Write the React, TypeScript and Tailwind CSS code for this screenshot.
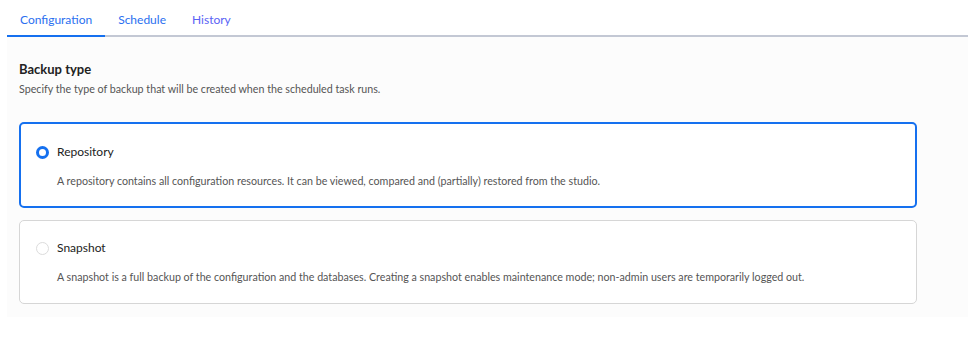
import { useState } from 'react';

type Option = {
  id: string;
  label: string;
  description: string;
};

const OPTIONS: Option[] = [
  {
    id: 'repository',
    label: 'Repository',
    description:
      'A repository contains all configuration resources. It can be viewed, compared and (partially) restored from the studio.',
  },
  {
    id: 'snapshot',
    label: 'Snapshot',
    description:
      'A snapshot is a full backup of the configuration and the databases. Creating a snapshot enables maintenance mode; non-admin users are temporarily logged out.',
  },
];

const TABS = ['Configuration', 'Schedule', 'History'];

function Radio({ checked }: { checked: boolean }) {
  return checked ? (
    <span className="w-[13px] h-[13px] rounded-full border-[3.5px] border-[#1570ef] bg-white shrink-0" />
  ) : (
    <span className="w-[13px] h-[13px] rounded-full border border-[#dcdcdc] bg-white shrink-0" />
  );
}

export default function App() {
  const [tab, setTab] = useState('Configuration');
  const [selected, setSelected] = useState('repository');

  return (
    <div className="w-[968px] h-[351px] bg-white pl-[7px] font-['Lato',sans-serif] text-[#222]">
      <div className="flex border-b-2 border-[#c3c8d4] h-[37px]">
        {TABS.map(t => (
          <button
            key={t}
            type="button"
            onClick={() => setTab(t)}
            className={`px-[13px] pt-[5px] text-[12px] -mb-[2px] border-b-2 ${
              tab === t ? 'border-[#1570ef]' : 'border-transparent'
            } ${t === 'History' ? 'text-[#5a63f5]' : 'text-[#2a6ff0]'}`}
          >
            {t}
          </button>
        ))}
      </div>
      <div className="bg-[#fcfcfc] h-[280px] pl-[12px] pr-[51px] pt-[23px]">
        <h2 className="text-[13px] font-bold leading-[18px] text-[#222]">Backup type</h2>
        <p className="text-[10.7px] text-[#555] mt-[3px] leading-[15px]">
          Specify the type of backup that will be created when the scheduled task runs.
        </p>
        <div className="flex flex-col gap-[12px] mt-[26px]">
          {OPTIONS.map(o => {
            const checked = selected === o.id;
            return (
              <div
                key={o.id}
                role="radio"
                aria-checked={checked}
                onClick={() => setSelected(o.id)}
                className={`cursor-pointer bg-white rounded-[5px] ${
                  checked
                    ? 'border-2 border-[#1570ef] h-[86px] pl-[15px] pt-[20px]'
                    : 'border border-[#d6d6d6] h-[84px] pl-[16px] pt-[19px]'
                }`}
              >
                <div className="flex items-center gap-[8px]">
                  <Radio checked={checked} />
                  <span className="text-[12px] text-[#222] leading-[16px]">{o.label}</span>
                </div>
                <p className="text-[10.7px] text-[#555] pl-[21px] mt-[13px] leading-[15px]">{o.description}</p>
              </div>
            );
          })}
        </div>
      </div>
    </div>
  );
}
